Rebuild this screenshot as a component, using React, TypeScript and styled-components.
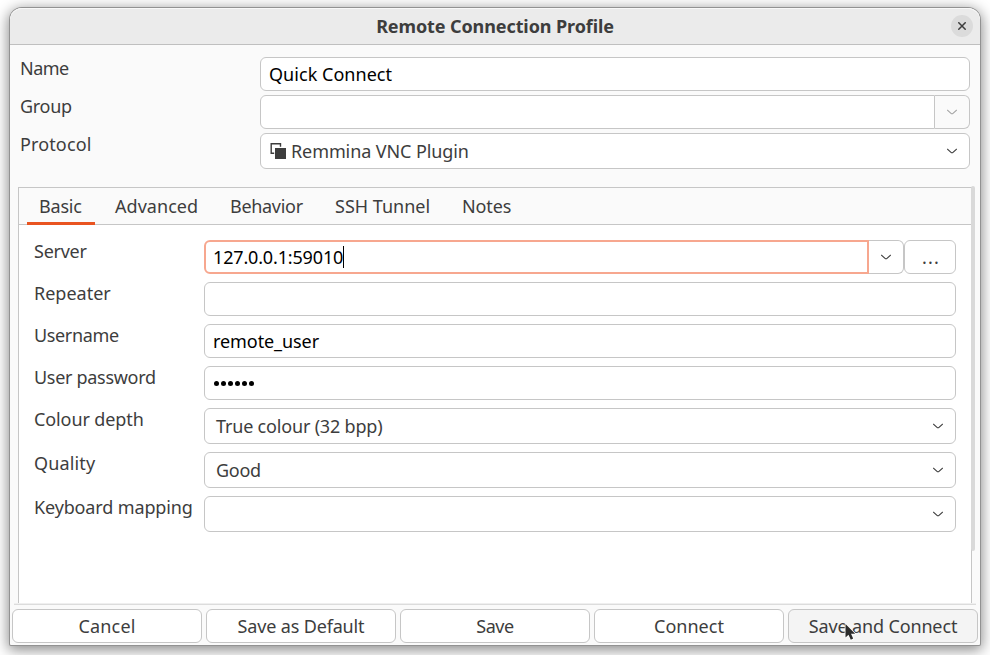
import React from "react";
import styled, { createGlobalStyle, css } from "styled-components";

const color = {
  ink: "#3d3d3d",
  line: "#c6c6c6",
  surface: "#fafafa",
  accent: "#e95420",
};

const GlobalStyle = createGlobalStyle`
  * { box-sizing: border-box; }
  html, body { margin: 0; background: #fff; overflow: hidden; }
  body { font: 18px/22px "Noto Sans", "Open Sans", sans-serif; color: ${color.ink}; }
`;

const Desktop = styled.main`
  width: 990px;
  height: 655px;
  padding: 8px 10px 10px;
  overflow: hidden;
`;

const Dialog = styled.section`
  display: flex;
  flex-direction: column;
  width: 970px;
  height: 637px;
  background: ${color.surface};
  border-radius: 12px 12px 1px 1px;
  box-shadow: 0 0 0 1px #929292, 0 3px 14px 2px rgba(0, 0, 0, 0.46);
`;

const TitleBar = styled.header`
  display: grid;
  grid-template-columns: 30px 1fr 30px;
  align-items: center;
  height: 37px;
  flex: none;
  background: #ebebeb;
  border-bottom: 1px solid #bfbfbf;
  border-radius: 12px 12px 0 0;
  box-shadow: inset 0 1px #f8f8f8;
`;

const Title = styled.h1`
  grid-column: 2;
  margin: 0;
  font-size: 18px;
  font-weight: 700;
  text-align: center;
  letter-spacing: -0.1px;
`;

const CloseButton = styled.button`
  display: grid;
  place-items: center;
  width: 22px;
  height: 22px;
  margin-left: 1px;
  padding: 0;
  border: 0;
  border-radius: 50%;
  background: #dbdbdb;
`;

const Caption = styled.span<{ $track?: number }>`
  white-space: pre;
  letter-spacing: ${(p) => p.$track ?? 0}px;
`;

const ProfileForm = styled.div`
  display: flex;
  flex-direction: column;
  gap: 4px;
  padding: 12px 10px 0;
`;

const ProfileRow = styled.div`
  display: grid;
  grid-template-columns: 240px 1fr;
`;

const Notebook = styled.div`
  display: flex;
  flex-direction: column;
  position: relative;
  height: 416px;
  width: 954px;
  margin: 18px 0 0 8px;
  border: 1px solid ${color.line};
  border-bottom: 0;
  background: #fff;
`;

const TabBar = styled.nav`
  display: flex;
  gap: 8px;
  height: 37px;
  flex: none;
  padding: 0 8px;
  background: ${color.surface};
  border-bottom: 1px solid ${color.line};
`;

const Tab = styled.div<{ $width: number; $active?: boolean }>`
  display: flex;
  align-items: center;
  height: 37px;
  width: ${(p) => p.$width}px;
  padding: 0 0 1px 12px;
  ${(p) => p.$active && css`box-shadow: inset 0 -3px ${color.accent};`}
`;

const TabPage = styled.div`
  display: flex;
  flex-direction: column;
  gap: 8px;
  padding: 15px 15px 0;
`;

const SettingRow = styled.div`
  display: grid;
  grid-template-columns: 170px 1fr;
`;

const FieldGroup = styled.div`
  display: flex;
`;

const Entry = styled.div<{ $focused?: boolean; $joined?: boolean }>`
  display: flex;
  align-items: center;
  flex: 1;
  height: 34px;
  padding: 0 8px;
  border: 1px solid ${color.line};
  border-radius: ${(p) => (p.$joined ? "6px 0 0 6px" : "6px")};
  background: #fff;
  color: #000;
  ${(p) =>
    p.$focused &&
    css`
      border: 2px solid #f7a78f;
      padding: 0 7px;
    `}
`;

const Caret = styled.i`
  width: 1px;
  height: 22px;
  background: #000;
`;

const Dots = styled.span`
  display: flex;
  gap: 2px;
  padding: 1px 0 0 1px;
`;

const Dot = styled.i`
  width: 5px;
  height: 5px;
  border-radius: 50%;
  background: #000;
`;

const Select = styled.div<{ $inset?: number }>`
  display: flex;
  align-items: center;
  gap: 5px;
  height: 36px;
  padding: 0 12px 0 ${(p) => p.$inset ?? 11}px;
  border: 1px solid ${color.line};
  border-radius: 6px;
  background: #fff;
  & > svg:last-child { margin-left: auto; }
`;

const DropButton = styled.button<{ $disabled?: boolean }>`
  display: grid;
  place-items: center;
  width: 35px;
  height: 34px;
  padding: 0;
  border: 1px solid ${color.line};
  border-left: 0;
  border-radius: 0 6px 6px 0;
  background: ${(p) => (p.$disabled ? color.surface : "#fff")};
  color: ${(p) => (p.$disabled ? "#a4a4a4" : color.ink)};
`;

const BrowseButton = styled.button`
  width: 52px;
  height: 34px;
  padding: 0 0 0 2px;
  border: 1px solid ${color.line};
  border-radius: 6px;
  background: #fff;
  font: inherit;
  color: ${color.ink};
  letter-spacing: 1.2px;
`;

const ScrollThumb = styled.div`
  position: absolute;
  top: -2px;
  right: -4px;
  width: 4px;
  height: 365px;
  border-radius: 2px;
  background: #d9d9d9;
`;

const ActionArea = styled.footer`
  display: flex;
  flex: 1;
  flex-direction: column;
`;

const Edge = styled.hr`
  width: 962px;
  height: 2px;
  margin: 0 4px 4px;
  border: 0;
  background: linear-gradient(#efefef 50%, #dcdcdc 50%);
`;

const ActionRow = styled.div`
  display: grid;
  grid-template-columns: repeat(5, 1fr);
  gap: 4px;
  padding: 0 2px;
`;

const ActionButton = styled.button<{ $hovered?: boolean }>`
  position: relative;
  height: 34px;
  padding: 0;
  border: 1px solid ${color.line};
  border-radius: 6px;
  background: ${(p) => (p.$hovered ? "#f4f4f4" : "#fff")};
  font: inherit;
  color: ${color.ink};
`;

const Pointer = styled.svg`
  position: absolute;
  left: 55px;
  top: 11px;
  overflow: visible;
`;

const Chevron = () => (
  <svg width="10" height="6" viewBox="0 0 10 6" fill="none" stroke="currentColor" strokeWidth="1.1">
    <path d="M.2 1 L4 4.3 Q5 5.2 6 4.3 L9.8 1" />
  </svg>
);

const ProtocolIcon = () => (
  <svg width="16" height="16" viewBox="0 0 16 16">
    <path d="M4.2 10.2H1.2V.8H10.5V3.8" fill="none" stroke={color.ink} strokeWidth="1.4" />
    <path d="M5 5h11v11H5z" fill={color.ink} />
  </svg>
);

const tabs = [
  { label: "Basic", width: 68, track: -0.19 },
  { label: "Advanced", width: 107, track: 0.04 },
  { label: "Behavior", width: 97, track: -0.3 },
  { label: "SSH Tunnel", width: 119, track: 0 },
  { label: "Notes", width: 73, track: -0.13 },
];

const actions = [
  { label: "Cancel", track: 0.2 },
  { label: "Save as Default", track: -0.16 },
  { label: "Save", track: -0.5 },
  { label: "Connect", track: 0 },
  { label: "Save and Connect", track: -0.14, hovered: true },
];

export default function App() {
  return (
    <Desktop>
      <GlobalStyle />
      <Dialog>
        <TitleBar>
          <Title>Remote Connection Profile</Title>
          <CloseButton aria-label="Close">
            <svg width="8" height="8" viewBox="0 0 8 8" stroke={color.ink} strokeWidth="1.5">
              <path d="M.3 .3 7.7 7.7M7.7 .3 .3 7.7" />
            </svg>
          </CloseButton>
        </TitleBar>

        <ProfileForm>
          <ProfileRow>
            <Caption $track={-0.5}>Name</Caption>
            <Entry><Caption $track={0.04}>Quick Connect</Caption></Entry>
          </ProfileRow>
          <ProfileRow>
            <Caption $track={-0.3}>Group</Caption>
            <FieldGroup>
              <Entry $joined />
              <DropButton $disabled><Chevron /></DropButton>
            </FieldGroup>
          </ProfileRow>
          <ProfileRow>
            <Caption $track={0.13}>Protocol</Caption>
            <Select $inset={9}>
              <ProtocolIcon />
              <Caption $track={-0.1}>Remmina VNC Plugin</Caption>
              <Chevron />
            </Select>
          </ProfileRow>
        </ProfileForm>

        <Notebook>
          <TabBar>
            {tabs.map((t, i) => (
              <Tab key={t.label} $width={t.width} $active={i === 0}>
                <Caption $track={t.track}>{t.label}</Caption>
              </Tab>
            ))}
          </TabBar>
          <TabPage>
            <SettingRow>
              <Caption $track={-0.25}>Server</Caption>
              <FieldGroup>
                <Entry $focused $joined>
                  <Caption $track={-0.16}>127.0.0.1:59010</Caption>
                  <Caret />
                </Entry>
                <DropButton><Chevron /></DropButton>
                <BrowseButton>...</BrowseButton>
              </FieldGroup>
            </SettingRow>
            <SettingRow>
              <Caption $track={0}>Repeater</Caption>
              <Entry />
            </SettingRow>
            <SettingRow>
              <Caption $track={-0.36}>Username</Caption>
              <Entry><Caption $track={-0.08}>remote_user</Caption></Entry>
            </SettingRow>
            <SettingRow>
              <Caption $track={-0.3}>User password</Caption>
              <Entry>
                <Dots>{[0, 1, 2, 3, 4, 5].map((n) => <Dot key={n} />)}</Dots>
              </Entry>
            </SettingRow>
            <SettingRow>
              <Caption $track={-0.1}>Colour depth</Caption>
              <Select><Caption $track={-0.18}>True colour (32 bpp)</Caption><Chevron /></Select>
            </SettingRow>
            <SettingRow>
              <Caption $track={0.14}>Quality</Caption>
              <Select><Caption $track={-0.29}>Good</Caption><Chevron /></Select>
            </SettingRow>
            <SettingRow>
              <Caption $track={-0.14}>Keyboard mapping</Caption>
              <Select><Chevron /></Select>
            </SettingRow>
          </TabPage>
          <ScrollThumb />
        </Notebook>

        <ActionArea>
          <Edge />
          <ActionRow>
            {actions.map((a) => (
              <ActionButton key={a.label} $hovered={a.hovered}>
                <Caption $track={a.track}>{a.label}</Caption>
                {a.hovered && (
                  <Pointer width="14" height="20" viewBox="0 0 14 20">
                    <path
                      d="M1.5 3v13.5l3-2.8 2.3 5 2.4-1.1-2.2-4.8h4.2z"
                      fill="#2b2b2b"
                      stroke="#fff"
                      strokeWidth="1.6"
                      strokeLinejoin="round"
                      paintOrder="stroke"
                    />
                  </Pointer>
                )}
              </ActionButton>
            ))}
          </ActionRow>
        </ActionArea>
      </Dialog>
    </Desktop>
  );
}
